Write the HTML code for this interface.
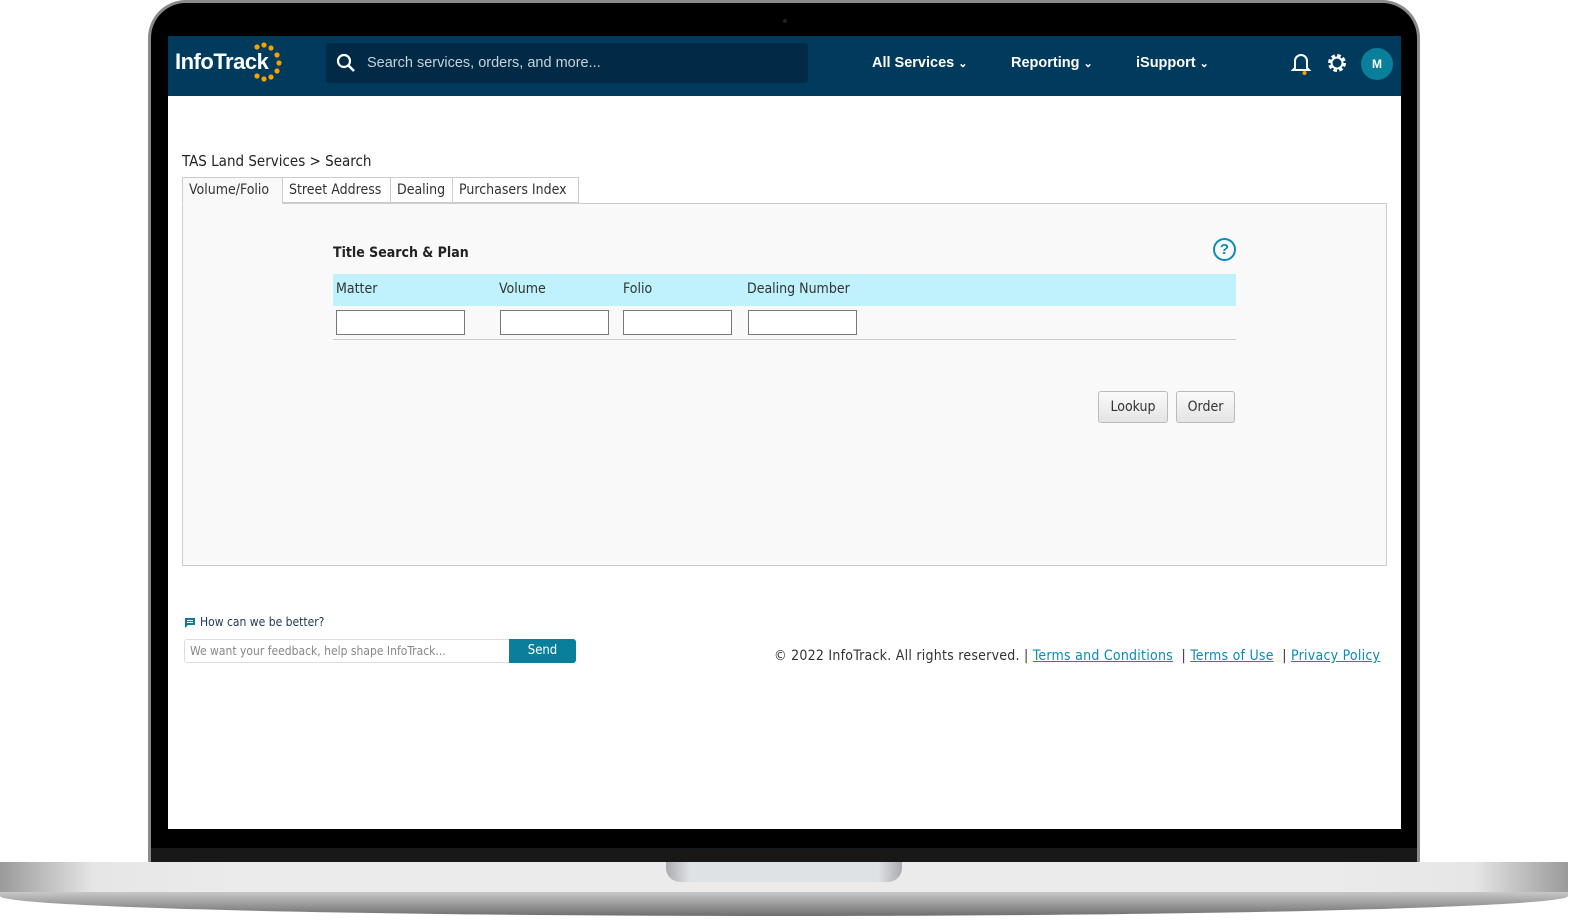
<!DOCTYPE html><html><head><style>
*{box-sizing:border-box;margin:0;padding:0}
body{width:1573px;height:923px;background:#fff;position:relative;overflow:hidden;font-family:"Liberation Sans",sans-serif}
.a{position:absolute}
.t{font-family:"DejaVu Sans Condensed","Liberation Sans",sans-serif;}
</style></head><body>
<div class="a" style="left:148px;top:0;width:1272px;height:880px;border-radius:38px 38px 0 0;background:#000;border:3px solid #8a8a8a;border-bottom:none"></div>
<div class="a" style="left:151px;top:848px;width:1266px;height:14px;background:#181818"></div>
<div class="a" style="left:783px;top:19px;width:4px;height:4px;border-radius:50%;background:#222"></div>
<div class="a" style="left:168px;top:36px;width:1233px;height:793px;background:#fff"></div>
<div class="a" style="left:168px;top:36px;width:1233px;height:60px;background:#003a5d"></div>
<div class="a" style="left:175px;top:49px;color:#fff;font-size:22px;font-weight:bold;letter-spacing:-0.5px" >InfoTrack</div>
<svg class="a" style="left:250px;top:42px" width="36" height="42"><g fill="#f5a100"><circle cx="7" cy="5" r="2.6"/><circle cx="14" cy="3" r="2.6"/><circle cx="21" cy="6" r="2.6"/><circle cx="27" cy="13" r="2.6"/><circle cx="29" cy="21" r="2.6"/><circle cx="27" cy="29" r="2.6"/><circle cx="21" cy="35" r="2.6"/><circle cx="14" cy="37" r="2.6"/><circle cx="7" cy="34" r="2.6"/></g></svg>
<div class="a" style="left:326px;top:43px;width:482px;height:40px;background:#002a45;border-radius:3px"></div>
<svg class="a" style="left:336px;top:53px" width="22" height="22"><circle cx="8" cy="8" r="6" stroke="#fff" stroke-width="2.2" fill="none"/><line x1="12.5" y1="12.5" x2="18" y2="18" stroke="#fff" stroke-width="2.5"/></svg>
<div class="a" style="left:367px;top:55px;color:#c8d3dc;font-size:14.5px">Search services, orders, and more...</div>
<div class="a" style="left:872px;top:55px;color:#fff;font-size:14.5px;font-weight:bold">All Services <span style="font-size:11px">&#8964;</span></div>
<div class="a" style="left:1011px;top:55px;color:#fff;font-size:14.5px;font-weight:bold">Reporting <span style="font-size:11px">&#8964;</span></div>
<div class="a" style="left:1136px;top:55px;color:#fff;font-size:14.5px;font-weight:bold">iSupport <span style="font-size:11px">&#8964;</span></div>
<svg class="a" style="left:1290px;top:52px" width="22" height="24"><path d="M5 16 V9 a6 6 0 0 1 12 0 V16 l2 2 H3z" fill="none" stroke="#fff" stroke-width="2"/><circle cx="14.5" cy="21" r="2" fill="#f5a100"/></svg>
<svg class="a" style="left:1326px;top:52px" width="22" height="22"><circle cx="11" cy="11" r="7" fill="none" stroke="#fff" stroke-width="4" stroke-dasharray="3.3 2.2"/><circle cx="11" cy="11" r="5.5" fill="none" stroke="#fff" stroke-width="2"/></svg>
<div class="a" style="left:1361px;top:48px;width:32px;height:32px;border-radius:50%;background:#0a7f9c;color:#fff;font-size:12px;font-weight:bold;text-align:center;line-height:32px">M</div>
<div class="a t" style="left:182px;top:152px;font-size:15px;color:#222">TAS Land Services &gt; Search</div>
<div class="a" style="left:182px;top:203px;width:1205px;height:363px;background:#f9f9f9;border:1px solid #ccc"></div>
<div class="a t" style="left:182px;top:177px;height:27px;width:101px;border:1px solid #ccc;border-bottom:1px solid #f9f9f9;background:#f9f9f9;font-size:14px;color:#333;padding:4px 0 0 6px">Volume/Folio</div>
<div class="a t" style="left:282px;top:177px;height:26px;width:109px;border:1px solid #ccc;background:#fff;font-size:14px;color:#333;padding:4px 0 0 6px">Street Address</div>
<div class="a t" style="left:390px;top:177px;height:26px;width:63px;border:1px solid #ccc;background:#fff;font-size:14px;color:#333;padding:4px 0 0 6px">Dealing</div>
<div class="a t" style="left:452px;top:177px;height:26px;width:127px;border:1px solid #ccc;background:#fff;font-size:14px;color:#333;padding:4px 0 0 6px">Purchasers Index</div>
<div class="a t" style="left:333px;top:245px;font-size:14px;color:#222;font-weight:bold">Title Search &amp; Plan</div>
<div class="a" style="left:1213px;top:238px;width:23px;height:23px;border:2px solid #0a8bb5;border-radius:50%;color:#0a8bb5;font-size:15px;font-weight:bold;text-align:center;line-height:19px">?</div>
<div class="a" style="left:333px;top:274px;width:903px;height:32px;background:#bff2fc"></div>
<div class="a" style="left:333px;top:339px;width:903px;height:1px;background:#ccc"></div>
<div class="a t" style="left:336px;top:281px;font-size:14px;color:#333">Matter</div>
<div class="a t" style="left:499px;top:281px;font-size:14px;color:#333">Volume</div>
<div class="a t" style="left:623px;top:281px;font-size:14px;color:#333">Folio</div>
<div class="a t" style="left:747px;top:281px;font-size:14px;color:#333">Dealing Number</div>
<div class="a" style="left:336px;top:310px;width:129px;height:25px;border:1px solid #777;background:#fff"></div>
<div class="a" style="left:500px;top:310px;width:109px;height:25px;border:1px solid #777;background:#fff"></div>
<div class="a" style="left:623px;top:310px;width:109px;height:25px;border:1px solid #777;background:#fff"></div>
<div class="a" style="left:748px;top:310px;width:109px;height:25px;border:1px solid #777;background:#fff"></div>
<div class="a t" style="left:1098px;top:391px;width:70px;height:32px;border:1px solid #bbb;border-radius:3px;background:linear-gradient(#fafafa,#e4e4e4);font-size:14px;color:#333;text-align:center;line-height:30px">Lookup</div>
<div class="a t" style="left:1176px;top:391px;width:59px;height:32px;border:1px solid #bbb;border-radius:3px;background:linear-gradient(#fafafa,#e4e4e4);font-size:14px;color:#333;text-align:center;line-height:30px">Order</div>
<svg class="a" style="left:184px;top:617px" width="12" height="12"><path d="M1 1h10v7H4l-3 3z" fill="#0a7f9c"/><path d="M3 3.5h6M3 5.5h6" stroke="#fff" stroke-width="1"/></svg>
<div class="a t" style="left:200px;top:615px;font-size:12px;color:#1c3a52">How can we be better?</div>
<div class="a" style="left:184px;top:639px;width:330px;height:24px;border:1px solid #ddd;border-radius:3px;background:#fff"></div>
<div class="a t" style="left:190px;top:644px;font-size:12px;color:#888">We want your feedback, help shape InfoTrack...</div>
<div class="a t" style="left:509px;top:639px;width:67px;height:24px;background:#0a7f9c;border-radius:0 3px 3px 0;color:#fff;font-size:13px;text-align:center;line-height:24px">Send</div>
<div class="a t" style="left:774px;top:648px;font-size:14px;color:#333;white-space:nowrap;letter-spacing:0.25px">© 2022 InfoTrack. All rights reserved. | <u style="color:#0a8bb5">Terms and Conditions</u> &nbsp;| <u style="color:#0a8bb5">Terms of Use</u> &nbsp;| <u style="color:#0a8bb5">Privacy Policy</u></div>
<div class="a" style="left:0;top:862px;width:1568px;height:30px;background:linear-gradient(90deg,#9a9a9a,#e6e6e6 6%,#ebebec 15%,#ebebec 85%,#e6e6e6 94%,#9a9a9a)"></div>
<div class="a" style="left:0;top:892px;width:1568px;height:24px;border-radius:0 0 60% 60%/0 0 100% 100%;background:linear-gradient(#c8c8c8,#6e6e6e)"></div>
<div class="a" style="left:666px;top:862px;width:236px;height:20px;border-radius:0 0 14px 14px;background:linear-gradient(90deg,#a9abae,#dfe2e4 10%,#dfe2e4 90%,#a9abae)"></div>
</body></html>
